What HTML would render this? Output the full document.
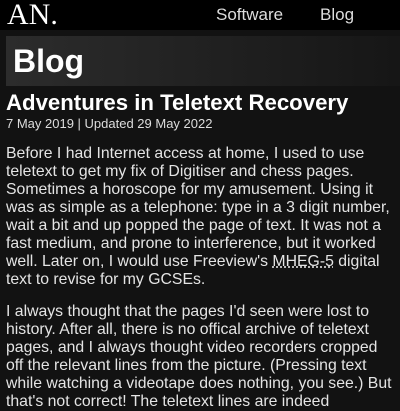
<!DOCTYPE html>
<html><head><style>
body{margin:0;width:400px;height:400px;overflow:hidden;background:#121212;font-family:"Liberation Sans",sans-serif;color:#e2e2e2}
.hdr{position:absolute;left:0;top:0;width:400px;height:30px;background:#000}
.logo{position:absolute;left:7px;top:0px;font-family:"Liberation Serif",serif;font-size:30px;color:#fff;line-height:30px}
.nav{position:absolute;top:4px;font-size:17px;color:#ddd;line-height:22px}
.ban{position:absolute;left:6px;top:36px;width:394px;height:50px;background:linear-gradient(90deg,#2c2c2c,#161616)}
.ban span{position:absolute;left:7px;top:6px;font-size:32px;font-weight:bold;color:#fff;line-height:38px}
h1{position:absolute;left:6px;top:90px;margin:0;font-size:22.2px;color:#fff;line-height:26px;white-space:nowrap}
.date{position:absolute;left:6px;top:116px;font-size:13px;line-height:16px;color:#ddd}
.p{position:absolute;left:6px;font-size:15.8px;line-height:18px;white-space:nowrap;color:#e4e4e4}
u{text-decoration:underline dotted}
</style></head><body>
<div class="hdr"></div>
<div class="logo">AN.</div>
<div class="nav" style="left:216px">Software</div>
<div class="nav" style="left:320px">Blog</div>
<div class="ban"><span>Blog</span></div>
<h1>Adventures in Teletext Recovery</h1>
<div class="date">7 May 2019 | Updated 29 May 2022</div>
<div class="p" style="top:145px">Before I had Internet access at home, I used to use<br>teletext to get my fix of Digitiser and chess pages.<br>Sometimes a horoscope for my amusement. Using it<br>was as simple as a telephone: type in a 3 digit number,<br>wait a bit and up popped the page of text. It was not a<br>fast medium, and prone to interference, but it worked<br>well. Later on, I would use Freeview's <u>MHEG-5</u> digital<br>text to revise for my GCSEs.</div>
<div class="p" style="top:303px">I always thought that the pages I'd seen were lost to<br>history. After all, there is no offical archive of teletext<br>pages, and I always thought video recorders cropped<br>off the relevant lines from the picture. (Pressing text<br>while watching a videotape does nothing, you see.) But<br>that's not correct! The teletext lines are indeed</div>
</body></html>
